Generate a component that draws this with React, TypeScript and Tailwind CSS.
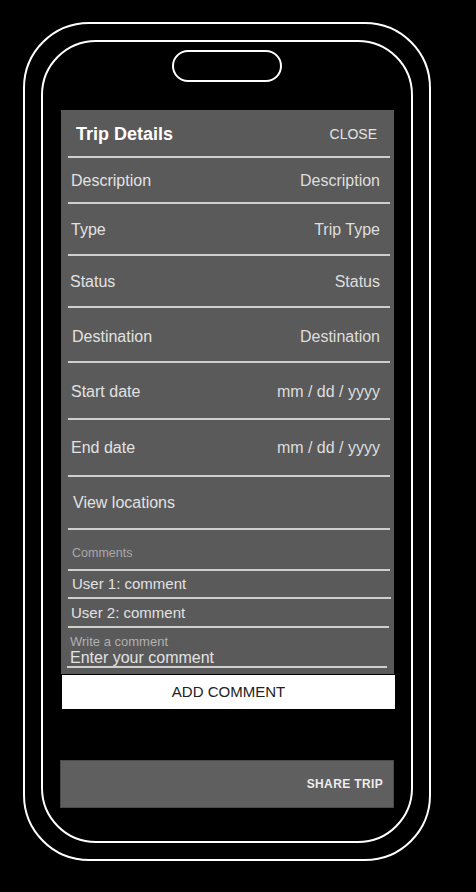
import React from 'react';

interface RowProps {
  label: string;
  value?: string;
  h: string;
  pt?: string;
  pl?: string;
}

// heights include the 2px bottom rule (border-box)
const Row: React.FC<RowProps> = ({ label, value, h, pt = '', pl = 'pl-[3px]' }) => (
  <div className={`flex items-center justify-between ${h} ${pt} ${pl} pr-[10px] ml-[7px] mr-[4px] border-b-2 border-[#cfcfcf]`}>
    <span className="text-[16px] text-[#e2e2e2]">{label}</span>
    {value && <span className="text-[16px] text-[#dedede]">{value}</span>}
  </div>
);

export default function App() {
  return (
    <div className="min-h-[892px] w-[476px] bg-black pt-[22px] pl-[23px]" style={{ fontFamily: '"Liberation Sans", Arial, sans-serif' }}>
      {/* outer phone shell */}
      <div className="w-[408px] h-[839px] border-2 border-white rounded-[66px] pt-[16px] pl-[16px]">
        {/* inner screen */}
        <div className="w-[372px] h-[803px] border-2 border-white rounded-[55px] flex flex-col">
          <div className="ml-[129px] mt-[8px] w-[110px] h-[32px] border-2 border-white rounded-full" />

          <div className="ml-[18px] mt-[28px] w-[333px] h-[564px] bg-[#5a5a5a] flex flex-col">
            <div className="flex items-center justify-between h-[48px] pt-[2px] pl-[8px] pr-[13px] ml-[7px] mr-[4px] border-b-2 border-[#cfcfcf]">
              <span className="text-[18px] font-bold text-white">Trip Details</span>
              <span className="text-[14px] text-[#e4e4e4]">CLOSE</span>
            </div>
            <Row label="Description" value="Description" h="h-[46px]" pt="pt-[2px]" />
            <Row label="Type" value="Trip Type" h="h-[52px]" pt="pt-[2px]" />
            <Row label="Status" value="Status" h="h-[52px]" pt="pt-[2px]" pl="pl-[2px]" />
            <Row label="Destination" value="Destination" h="h-[55px]" pt="pt-[5px]" pl="pl-[4px]" />
            <Row label="Start date" value="mm / dd / yyyy" h="h-[57px]" pt="pt-[3px]" />
            <Row label="End date" value="mm / dd / yyyy" h="h-[57px]" pt="pt-[1px]" />
            <Row label="View locations" h="h-[53px]" pt="pt-[1px]" pl="pl-[5px]" />
            <div className="flex items-center h-[41px] pt-[7px] pl-[4px] ml-[7px] mr-[4px] border-b-2 border-[#cfcfcf]">
              <span className="text-[12.5px] text-[#a9a9a9]">Comments</span>
            </div>
            <div className="flex items-center h-[28px] pl-[4px] ml-[7px] mr-[3px] border-b-2 border-[#cfcfcf]">
              <span className="text-[15px] text-[#e2e2e2]">User 1: comment</span>
            </div>
            <div className="flex items-center h-[29px] pt-[1px] pl-[3px] ml-[7px] mr-[5px] border-b-2 border-[#cfcfcf]">
              <span className="text-[15px] text-[#e2e2e2]">User 2: comment</span>
            </div>
            <div className="flex flex-col h-[40px] pt-[6px] pl-[3px] ml-[6px] mr-[7px] border-b-2 border-[#cfcfcf]">
              <span className="text-[13px] leading-[15px] text-[#b0b0b0]">Write a comment</span>
              <span className="text-[16px] leading-[17px] text-[#e2e2e2]">Enter your comment</span>
            </div>
          </div>

          <button className="ml-[19px] mt-[1px] w-[333px] h-[34px] bg-white text-[15px] text-[#222] flex items-center justify-center">
            ADD COMMENT
          </button>

          <div className="ml-[17px] mt-[51px] w-[334px] h-[48px] bg-[#5f5f5f] border border-[#4a4a4a] flex items-center justify-end pr-[10px]">
            <span className="text-[12px] font-bold tracking-[0.03em] text-[#ececec]">SHARE TRIP</span>
          </div>
        </div>
      </div>
    </div>
  );
}
